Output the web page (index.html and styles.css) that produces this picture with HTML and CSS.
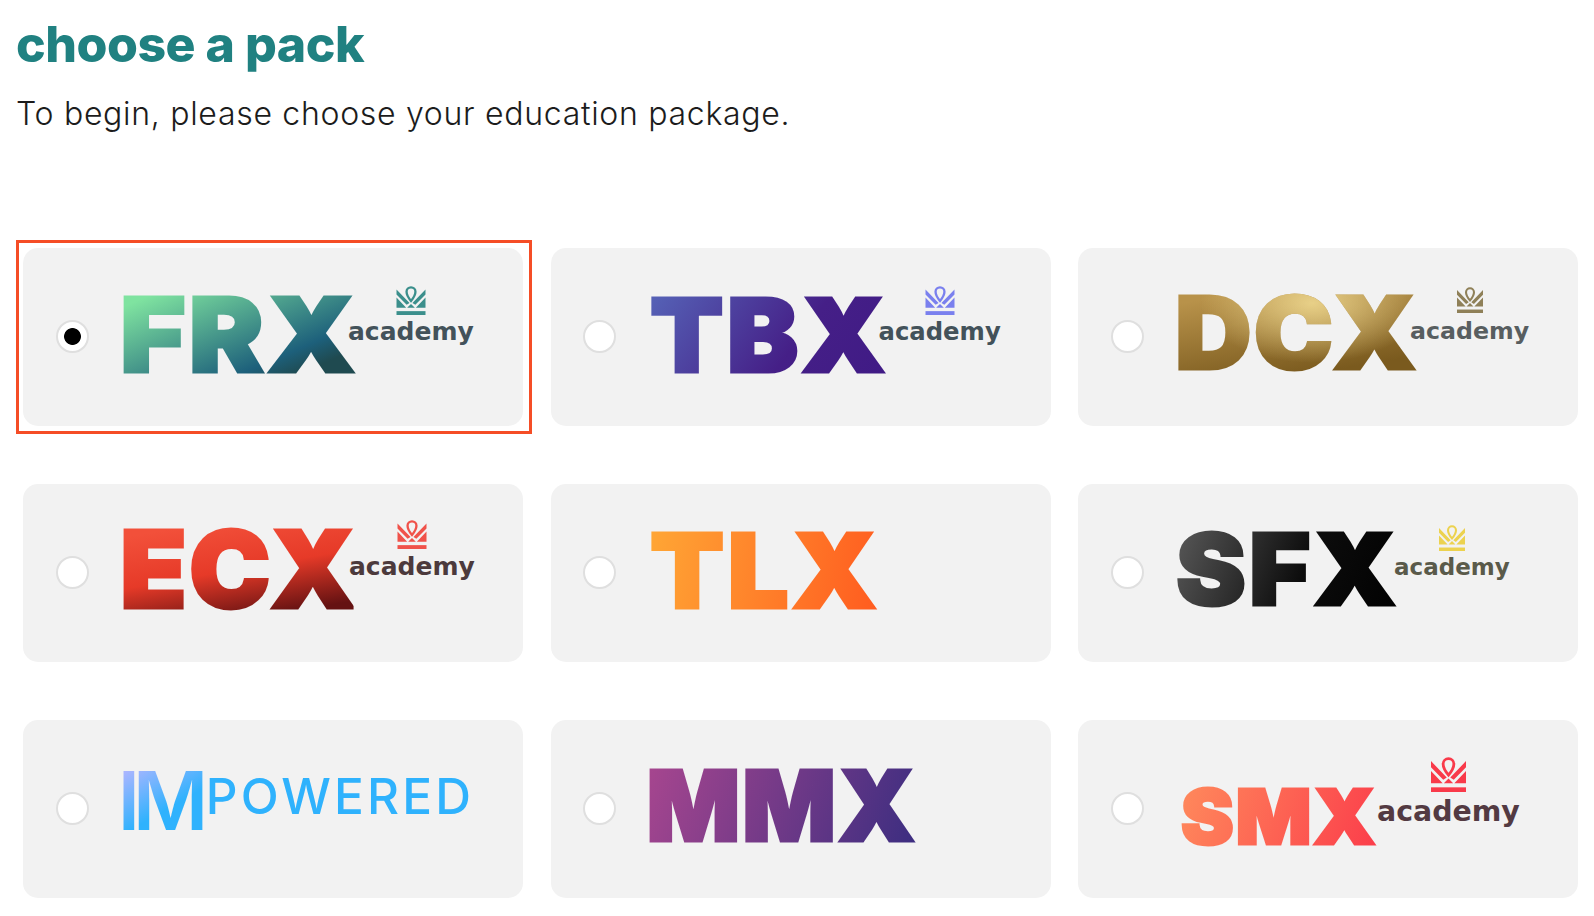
FILE: index.html
```html
<!DOCTYPE html>
<html lang="en">
<head>
  <meta charset="UTF-8" />
  <title>Choose a pack</title>
  <link rel="stylesheet" href="styles.css">
</head>
<body>
  <svg class="defs" width="0" height="0">
    <symbol id="crown" viewBox="0 0 30 30">
      <path d="M15 15.5 C12.5 12.5 10.4 9.5 10.4 6 a4.6 4.6 0 0 1 9.2 0 C19.6 9.5 17.5 12.5 15 15.5 Z" fill="none" stroke="currentColor" stroke-width="2.4"/>
      <path d="M0 3.5 L0 8.8 L10.5 19.5 L13.5 17.5 Z M30 3.5 L30 8.8 L19.5 19.5 L16.5 17.5 Z" fill="currentColor"/>
      <path d="M0 12 L0 22.5 L10 22.5 Z M30 12 L30 22.5 L20 22.5 Z M15 18.5 L19 22.5 L11 22.5 Z" fill="currentColor"/>
      <rect x="0" y="26" width="30" height="4" fill="currentColor"/>
    </symbol>
  </svg>

  <h1>choose a pack</h1>
  <p class="intro">To begin, please choose your education package.</p>

  <form class="packs">
    <label class="pack selected">
      <span class="radio"></span>
      <span class="logo logo-frx">
        <span class="word">FRX</span>
        <span class="mark"><svg class="crown"><use href="#crown"/></svg><span class="academy">academy</span></span>
      </span>
    </label>
    <label class="pack">
      <span class="radio"></span>
      <span class="logo logo-tbx">
        <span class="word">TBX</span>
        <span class="mark"><svg class="crown"><use href="#crown"/></svg><span class="academy">academy</span></span>
      </span>
    </label>
    <label class="pack">
      <span class="radio"></span>
      <span class="logo logo-dcx">
        <span class="word">DCX</span>
        <span class="mark"><svg class="crown"><use href="#crown"/></svg><span class="academy">academy</span></span>
      </span>
    </label>
    <label class="pack">
      <span class="radio"></span>
      <span class="logo logo-ecx">
        <span class="word">ECX</span>
        <span class="mark"><svg class="crown"><use href="#crown"/></svg><span class="academy">academy</span></span>
      </span>
    </label>
    <label class="pack">
      <span class="radio"></span>
      <span class="logo logo-tlx">
        <span class="word">TLX</span>
      </span>
    </label>
    <label class="pack">
      <span class="radio"></span>
      <span class="logo logo-sfx">
        <span class="word">SFX</span>
        <span class="mark"><svg class="crown"><use href="#crown"/></svg><span class="academy">academy</span></span>
      </span>
    </label>
    <label class="pack">
      <span class="radio"></span>
      <span class="logo logo-imp">
        <span class="word">IM</span>
        <span class="powered">POWERED</span>
      </span>
    </label>
    <label class="pack">
      <span class="radio"></span>
      <span class="logo logo-mmx">
        <span class="word">MMX</span>
      </span>
    </label>
    <label class="pack">
      <span class="radio"></span>
      <span class="logo logo-smx">
        <span class="word">SMX</span>
        <span class="mark"><svg class="crown"><use href="#crown"/></svg><span class="academy">academy</span></span>
      </span>
    </label>
  </form>
</body>
</html>
```
FILE: styles.css
```css
body {
  margin: 0;
  padding: 0 16px 0 16px;
  background-color: #fff;
  font-family: Inter, "Liberation Sans", sans-serif;
}
.defs {
  position: absolute;
}
h1 {
  margin: 0;
  padding-top: 14px;
  font-size: 50px;
  line-height: 60px;
  font-weight: 800;
  letter-spacing: -0.5px;
  color: #208181;
}
.intro {
  margin: 16px 0 0;
  font-size: 32px;
  line-height: 48px;
  font-weight: 300;
  letter-spacing: 0.7px;
  color: #1c1c1c;
}
.packs {
  display: grid;
  grid-template-columns: repeat(3, 500px);
  grid-auto-rows: 178px;
  column-gap: 27.5px;
  row-gap: 58px;
  margin: 110px 0 0 7px;
}
.pack {
  position: relative;
  display: flex;
  align-items: flex-start;
  padding-left: 32.5px;
  background-color: #f2f2f2;
  border-radius: 15px;
}
.pack.selected::before {
  content: "";
  position: absolute;
  inset: -8px -9px -8px -7px;
  border: 3px solid #f54d26;
}
.radio {
  flex: none;
  box-sizing: border-box;
  width: 33px;
  height: 33px;
  margin-top: 72px;
  margin-right: 34.5px;
  border: 2px solid #dfdfdf;
  border-radius: 50%;
  background-color: #fff;
}
.selected .radio {
  background: radial-gradient(circle, #000 8px, #fff 8.8px);
}
.logo {
  display: flex;
  align-items: flex-start;
}
.word {
  flex: none;
  font-weight: 900;
  line-height: 1;
  white-space: nowrap;
  transform-origin: left center;
  -webkit-text-stroke: 3px transparent;
  -webkit-background-clip: text;
  background-clip: text;
  color: transparent;
}
.mark {
  display: flex;
  flex-direction: column;
  align-items: center;
}
.crown {
  width: 30px;
  height: 29px;
}
.academy {
  margin-top: 4px;
  font-family: "DejaVu Sans", sans-serif;
  font-size: 25px;
  line-height: 1;
  font-weight: 700;
}

.logo-frx { margin-top: 34.5px; }
.logo-frx .word {
  width: 228px;
  margin-left: -3px;
  font-size: 103px;
  letter-spacing: 3px;
  transform: scaleX(1.09);
  background-image: linear-gradient(155deg, #7fe3a0 12%, #1d607b 68%, #1f4a50 80%);
}
.logo-frx .mark { margin-top: 3.5px; }
.logo-frx .crown { color: #3b8f8c; }
.logo-frx .academy { color: #43525a; }

.logo-tbx { margin-top: 35.5px; }
.logo-tbx .word {
  width: 229px;
  margin-left: -1px;
  font-size: 102px;
  letter-spacing: 3px;
  transform: scaleX(1.05);
  background-image: linear-gradient(125deg, #5560b5 5%, #451f87 60%, #3f1a85);
}
.logo-tbx .mark { margin-top: 2.5px; }
.logo-tbx .crown { color: #7a80ee; }
.logo-tbx .academy { color: #43525a; font-size: 24.3px; margin-top: 5px; }

.logo-dcx { margin-top: 35px; }
.logo-dcx .word {
  width: 235px;
  margin-left: -3px;
  font-size: 100px;
  letter-spacing: 2px;
  transform: scaleX(1.06);
  background-image: radial-gradient(ellipse 45% 60% at 55% 20%, #e8d088, transparent), linear-gradient(170deg, #b8924a 15%, #7a5a1e 80%);
}
.logo-dcx .mark { margin-top: 4px; }
.logo-dcx .crown { color: #8f8058; width: 28px; height: 26px; }
.logo-dcx .academy { color: #585e60; font-size: 23.7px; margin-top: 7px; }

.logo-ecx { margin-top: 32px; }
.logo-ecx .word {
  width: 229px;
  margin-left: -3px;
  font-size: 107px;
  letter-spacing: 2px;
  transform: scaleX(1.02);
  background-image: linear-gradient(170deg, #f2503a 15%, #e63a28 50%, #651212 85%);
}
.logo-ecx .mark { margin-top: 4px; }
.logo-ecx .crown { color: #f0524a; }
.logo-ecx .academy { color: #4c3a3c; margin-top: 5px; }

.logo-tlx { margin-top: 34.5px; }
.logo-tlx .word {
  margin-left: -1px;
  font-size: 103px;
  letter-spacing: 3px;
  transform: scaleX(1.05);
  background-image: linear-gradient(100deg, #ffa735, #ff5a1f);
}

.logo-sfx { margin-top: 36px; }
.logo-sfx .word {
  width: 218px;
  margin-left: -2px;
  font-size: 99px;
  letter-spacing: 3px;
  transform: scaleX(1.06);
  background-image: linear-gradient(110deg, #5a5a5a, #0c0c0c 55%, #000);
}
.logo-sfx .mark { margin-top: 5px; }
.logo-sfx .crown { color: #ecd24f; width: 28px; height: 26px; }
.logo-sfx .academy { color: #5a5a4a; font-size: 23px; margin-top: 5px; }

.logo-imp { margin-top: 51px; }
.logo-imp .word {
  margin-left: -5.5px;
  font-weight: 600;
  font-size: 82px;
  line-height: 60px;
  letter-spacing: -7.5px;
  padding-right: 5px;
  -webkit-text-stroke: 0;
  background-image: linear-gradient(150deg, #b4b6ff, #2fb2fd 60%);
}
.logo-imp .powered {
  margin-top: 7px;
  font-size: 49.5px;
  line-height: 36px;
  font-weight: 500;
  letter-spacing: 3.1px;
  color: #2fb2fd;
}

.logo-mmx { margin-top: 37px; }
.logo-mmx .word {
  margin-left: -4px;
  font-size: 98px;
  letter-spacing: 2px;
  background-image: linear-gradient(110deg, #a8468f, #3a2d80);
}

.logo-smx { margin-top: 58px; }
.logo-smx .word {
  width: 196px;
  margin-left: 3px;
  font-size: 76px;
  letter-spacing: 2px;
  transform: scaleX(1.04);
  background-image: linear-gradient(110deg, #ff8a5c, #fb3a4a);
}
.logo-smx .mark { margin-top: -21px; }
.logo-smx .crown { color: #f93a4a; width: 35px; height: 35px; }
.logo-smx .academy { color: #533a42; font-size: 28.4px; margin-top: 6px; }
```
